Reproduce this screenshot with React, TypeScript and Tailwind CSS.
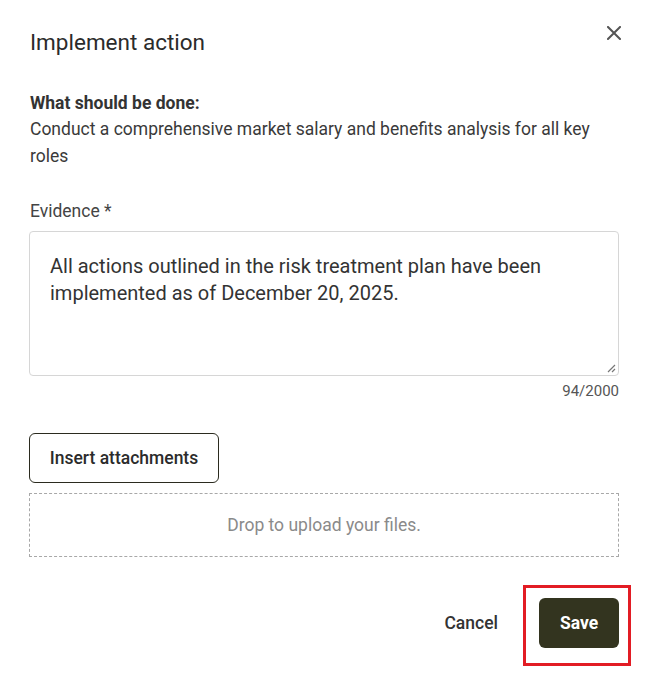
import React from "react";

export default function App() {
  return (
    <div
      className="relative w-[646px] h-[677px] bg-white overflow-hidden"
      style={{ fontFamily: "Roboto, 'Liberation Sans', sans-serif" }}
    >
      <div className="pt-[26px] pl-[29px] pr-[27px]">
        <div className="flex items-start justify-between">
          <h1 className="text-[22.5px] leading-[32px] font-normal text-[#2b2b2b] pl-[1px]">
            Implement action
          </h1>
          <button className="mt-0 -mr-[2px] text-[#555]" aria-label="Close">
            <svg width="14" height="14" viewBox="0 0 14 14">
              <path
                d="M1 1 L13 13 M13 1 L1 13"
                stroke="#555"
                strokeWidth="2"
                strokeLinecap="square"
              />
            </svg>
          </button>
        </div>

        <div className="mt-[32px] pl-[1px]">
          <div className="text-[17.5px] leading-[26px] font-bold text-[#333]">
            What should be done:
          </div>
          <div className="text-[17.5px] leading-[27px] text-[#3a3a3a]">
            Conduct a comprehensive market salary and benefits analysis for all key roles
          </div>
        </div>

        <div className="mt-[29px] pl-[1px] text-[17.5px] leading-[24px] text-[#444]">
          Evidence *
        </div>

        <div className="relative mt-[8px] h-[145px] border border-[#d6d6d6] rounded-[4px] pt-[21px] px-[20px]">
          <div className="text-[20px] leading-[27px] text-[#333]">
            All actions outlined in the risk treatment plan have been implemented as of December 20, 2025.
          </div>
          <svg
            className="absolute right-[2px] bottom-[2px]"
            width="9"
            height="9"
            viewBox="0 0 9 9"
          >
            <path d="M8 1 L1 8 M8 5 L5 8" stroke="#777" strokeWidth="1.2" />
          </svg>
        </div>

        <div className="mt-[5px] text-right text-[15px] leading-[20px] text-[#555]">
          94/2000
        </div>

        <button className="mt-[32px] w-[190px] h-[50px] border border-[#2b2b1f] rounded-[6px] text-[17.5px] font-medium text-[#2b2b2b] flex items-center justify-center">
          Insert attachments
        </button>

        <div className="mt-[10px] h-[64px] border border-dashed border-[#a8a8a8] flex items-center justify-center text-[17.5px] text-[#8a8a8a]">
          Drop to upload your files.
        </div>

        <div className="mt-[41px] flex items-center justify-end gap-[41px]">
          <button className="text-[17.5px] font-medium text-[#333]">Cancel</button>
          <div className="relative">
            <button className="w-[80px] h-[50px] rounded-[6px] bg-[#33341f] text-white text-[17.5px] font-bold">
              Save
            </button>
            <div className="absolute left-[-16px] top-[-13px] w-[108px] h-[81px] border-[3px] border-[#e21c24] pointer-events-none" />
          </div>
        </div>
      </div>
    </div>
  );
}
